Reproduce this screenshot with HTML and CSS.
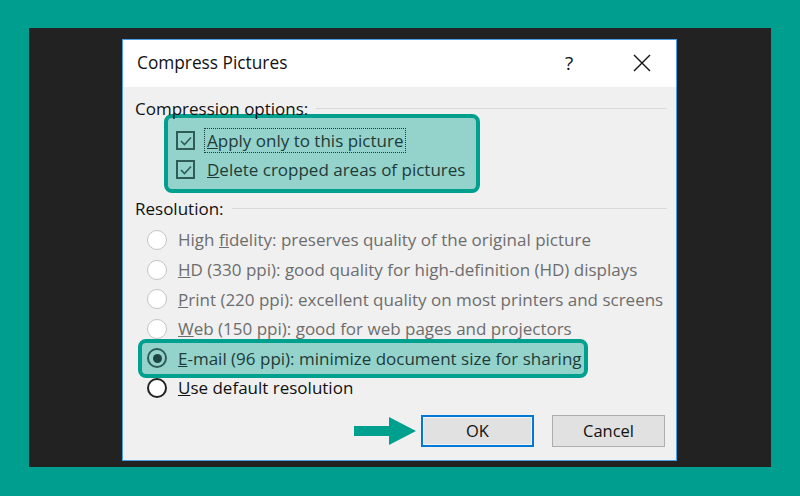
FILE: index.html
```html
<!DOCTYPE html>
<html lang="en">
<head>
  <meta charset="UTF-8">
  <meta name="viewport" content="width=device-width, initial-scale=1.0">
  <title>Compress Pictures</title>
  <link rel="stylesheet" href="styles.css">
</head>
<body>
  <div class="frame">
    <div class="dialog">

      <!-- Title bar -->
      <div class="title-bar">
        <span class="title">Compress Pictures</span>
        <span class="help">?</span>
        <svg class="close" width="18" height="18" viewBox="0 0 18 18">
          <path d="M1 1 L17 17 M17 1 L1 17" stroke="#111" stroke-width="1.4" fill="none"/>
        </svg>
      </div>

      <div class="content">
        <div class="group-head"><span>Compression options:</span><div class="rule"></div></div>

        <!-- Highlighted checkboxes -->
        <div class="mark mark-checks">
          <div class="check-row">
            <span class="checkbox"><svg width="14" height="14" viewBox="0 0 14 14"><path d="M2 7 L5.5 10.5 L12 3.5" stroke="#2f5c57" stroke-width="1.6" fill="none"/></svg></span>
            <span class="label focused"><u>A</u>pply only to this picture</span>
          </div>
          <div class="check-row">
            <span class="checkbox"><svg width="14" height="14" viewBox="0 0 14 14"><path d="M2 7 L5.5 10.5 L12 3.5" stroke="#2f5c57" stroke-width="1.6" fill="none"/></svg></span>
            <span class="label"><u>D</u>elete cropped areas of pictures</span>
          </div>
        </div>

        <div class="group-head group-res"><span>Resolution:</span><div class="rule"></div></div>

        <div class="radio-row disabled"><span class="radio"></span><span>High <u>f</u>idelity: preserves quality of the original picture</span></div>
        <div class="radio-row disabled"><span class="radio"></span><span><u>H</u>D (330 ppi): good quality for high-definition (HD) displays</span></div>
        <div class="radio-row disabled"><span class="radio"></span><span><u>P</u>rint (220 ppi): excellent quality on most printers and screens</span></div>
        <div class="radio-row disabled"><span class="radio"></span><span><u>W</u>eb (150 ppi): good for web pages and projectors</span></div>
        <div class="mark mark-radio">
          <div class="radio-row selected"><span class="radio"></span><span><u>E</u>-mail (96 ppi): minimize document size for sharing</span></div>
        </div>
        <div class="radio-row"><span class="radio dark"></span><span><u>U</u>se default resolution</span></div>

        <!-- Buttons -->
        <div class="buttons">
          <svg class="arrow" width="62" height="28" viewBox="0 0 62 28">
            <path d="M0 9 L35 9 L35 0 L62 14 L35 28 L35 19 L0 19 Z" fill="#00a08f"/>
          </svg>
          <button class="btn default">OK</button>
          <button class="btn">Cancel</button>
        </div>
      </div>

    </div>
  </div>
</body>
</html>
```

FILE: styles.css
```css
/* Page and dark frame */
body {
  margin: 0;
  background-color: #009e8e;
  font-family: "Open Sans", "Noto Sans", sans-serif;
  font-size: 17px;
  color: #111;
}
.frame {
  margin: 28px 29px 0 29px;
  height: 439px;
  background-color: #222222;
  padding: 11px 0 0 93px;
  box-sizing: border-box;
}

/* Dialog window */
.dialog {
  width: 555px;
  height: 422px;
  box-sizing: border-box;
  border: 1px solid #4a9ee6;
  background-color: #f0f0f0;
}
.title-bar {
  height: 47px;
  background-color: #fff;
  display: flex;
  align-items: center;
  padding-left: 14px;
}
.title {
  font-size: 17.3px;
  flex: 1;
  margin-top: -2px;
}
.help {
  font-size: 19px;
  width: 20px;
  margin-right: 48px;
  margin-top: -2px;
}
.close {
  margin-right: 25px;
  margin-top: -2px;
}

.content {
  padding: 0 9px 0 12px;
}

/* Group headers with a line */
.group-head {
  display: flex;
  align-items: center;
  height: 20px;
  margin-top: 11px;
}
.group-head .rule {
  flex: 1;
  height: 1px;
  background-color: #d9d9d9;
  margin-left: 8px;
}
.group-res {
  margin-top: 5px;
}

/* Teal highlight marks */
.mark {
  border: 4px solid #00a08f;
  border-radius: 8px;
  background-color: #94d3cc;
  box-sizing: border-box;
}
.mark-checks {
  width: 316px;
  margin: -4px 0 0 29px;
  padding: 8px 0 5px 8px;
  color: #1e3b38;
}
.check-row {
  height: 29px;
  display: flex;
  align-items: center;
}
.checkbox {
  width: 19px;
  height: 19px;
  box-sizing: border-box;
  border: 2px solid #2f5c57;
  display: flex;
  align-items: center;
  justify-content: center;
  margin-right: 9px;
}
.label {
  border: 1px dotted transparent;
  padding: 0 2px;
  line-height: 23px;
}
.label.focused {
  border-color: #1e3b38;
}

/* Radio rows */
.radio-row {
  height: 29.6px;
  display: flex;
  align-items: center;
  padding-left: 12px;
}
.group-res + .radio-row {
  margin-top: 7.2px;
}
.radio {
  width: 20px;
  height: 20px;
  box-sizing: border-box;
  border-radius: 50%;
  border: 1.5px solid #c4c4c4;
  background-color: #fff;
  margin-right: 11px;
  flex-shrink: 0;
}
.disabled {
  color: #6d6d6d;
}
.radio.dark {
  border: 2px solid #222;
}
.mark-radio {
  width: 450px;
  height: 39px;
  margin: -4.7px 0 -4.7px 3px;
  color: #1e3b38;
}
.mark-radio .radio-row {
  height: 31px;
  padding-left: 5px;
}
.selected .radio {
  border: 2px solid #2f5c57;
  background-color: transparent;
  display: flex;
  align-items: center;
  justify-content: center;
}
.selected .radio::after {
  content: "";
  width: 9px;
  height: 9px;
  border-radius: 50%;
  background-color: #1e4541;
}

/* Bottom buttons */
.buttons {
  display: flex;
  justify-content: flex-end;
  align-items: center;
  margin-top: 12px;
  padding-right: 2px;
}
.arrow {
  margin-right: 5px;
}
.btn {
  width: 113px;
  height: 32px;
  font-family: inherit;
  font-size: 16.5px;
  color: #111;
  background-color: #e1e1e1;
  border: 1px solid #adadad;
  margin-left: 18px;
}
.btn.default {
  margin-left: 0;
  border: 2px solid #0078d7;
  box-shadow: inset 0 0 0 1px #f4f4f4;
}
```
